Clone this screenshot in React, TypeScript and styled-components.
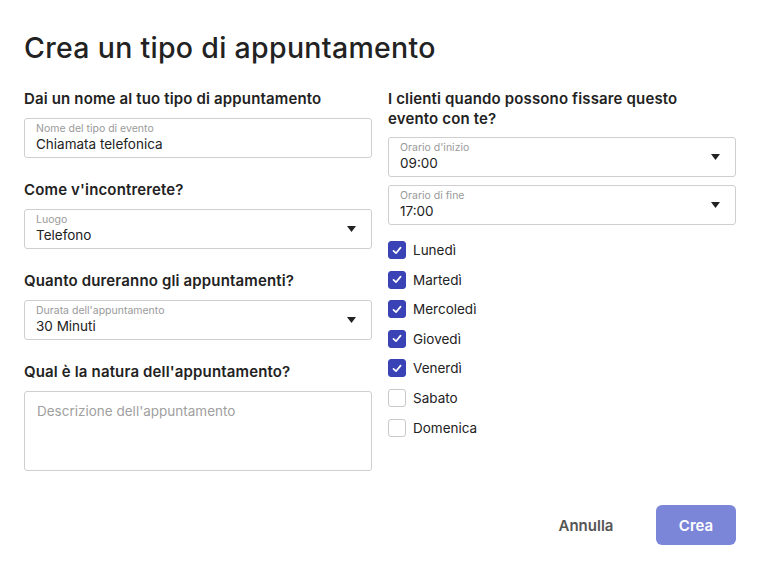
import React from "react";
import styled, { createGlobalStyle } from "styled-components";

const Global = createGlobalStyle`
  html, body { margin: 0; padding: 0; background: #fff; }
  body { font-family: "Inter", "Noto Sans", sans-serif; color: #222; }
  * { box-sizing: border-box; }
`;

const Page = styled.div`
  width: 762px;
  height: 570px;
  padding: 30px 26px 25px 24px;
  display: flex;
  flex-direction: column;
`;

const Title = styled.h1`
  margin: 0;
  font-size: 28.5px;
  line-height: 36px;
  font-weight: 500;
  color: #222;
  letter-spacing: 0.3px;
`;

const Columns = styled.div`
  margin-top: 23px;
  display: grid;
  grid-template-columns: 348px 348px;
  column-gap: 16px;
`;

const Column = styled.div`
  display: flex;
  flex-direction: column;
`;

const Heading = styled.div<{ $gap?: number; $mb?: number }>`
  font-size: 15px;
  line-height: 20px;
  font-weight: 600;
  color: #222;
  letter-spacing: 0.15px;
  margin-top: ${(p) => p.$gap ?? 0}px;
  margin-bottom: ${(p) => p.$mb ?? 9}px;
`;

const Field = styled.div<{ $mt?: number }>`
  position: relative;
  height: 40px;
  border: 1px solid #cfcfcf;
  border-radius: 3px;
  padding: 3px 11px 0;
  margin-top: ${(p) => p.$mt ?? 0}px;
  display: flex;
  flex-direction: column;
`;

const FieldLabel = styled.div`
  font-size: 10.5px;
  line-height: 13px;
  color: #9a9a9a;
`;

const FieldValue = styled.div`
  font-size: 13.5px;
  line-height: 18px;
  color: #222;
`;

const Caret = styled.svg`
  position: absolute;
  right: 15px;
  top: 16px;
`;

const TextArea = styled.div`
  height: 80px;
  border: 1px solid #cfcfcf;
  border-radius: 3px;
  padding: 10px 12px;
  font-size: 13.5px;
  line-height: 18px;
  color: #a0a0a0;
`;

const CheckList = styled.div`
  margin-top: 15px;
  display: flex;
  flex-direction: column;
  gap: 9.6px;
`;

const CheckRow = styled.div`
  display: flex;
  align-items: center;
  height: 20px;
  gap: 7px;
  font-size: 13.5px;
  color: #222;
`;

const Box = styled.div<{ $on: boolean }>`
  width: 18px;
  height: 18px;
  border-radius: 3px;
  background: ${(p) => (p.$on ? "#3a43b5" : "#fff")};
  border: 1px solid ${(p) => (p.$on ? "#3a43b5" : "#c9c9c9")};
  display: flex;
  align-items: center;
  justify-content: center;
`;

const Footer = styled.div`
  margin-top: auto;
  display: flex;
  justify-content: flex-end;
  align-items: center;
  gap: 30px;
`;

const Button = styled.button<{ $primary?: boolean }>`
  width: 80px;
  height: 40px;
  border: none;
  border-radius: 6px;
  font-family: inherit;
  font-size: 15px;
  font-weight: 600;
  cursor: pointer;
  background: ${(p) => (p.$primary ? "#7c86d9" : "transparent")};
  color: ${(p) => (p.$primary ? "#fff" : "#555")};
`;

const Arrow = () => (
  <Caret width="9" height="6" viewBox="0 0 9 6">
    <path d="M0 0 H9 L4.5 6 Z" fill="#222" />
  </Caret>
);

const Check = () => (
  <svg width="10" height="9" viewBox="0 0 10 9">
    <path d="M1.5 4.8 L4 7.2 L8.6 1.6" fill="none" stroke="#fff" strokeWidth="1.7" strokeLinecap="round" strokeLinejoin="round" />
  </svg>
);

const days: [string, boolean][] = [
  ["Lunedì", true],
  ["Martedì", true],
  ["Mercoledì", true],
  ["Giovedì", true],
  ["Venerdì", true],
  ["Sabato", false],
  ["Domenica", false],
];

export default function App() {
  return (
    <>
      <Global />
      <Page>
        <Title>Crea un tipo di appuntamento</Title>
        <Columns>
          <Column>
            <Heading>Dai un nome al tuo tipo di appuntamento</Heading>
            <Field>
              <FieldLabel>Nome del tipo di evento</FieldLabel>
              <FieldValue>Chiamata telefonica</FieldValue>
            </Field>
            <Heading $gap={22}>Come v'incontrerete?</Heading>
            <Field>
              <FieldLabel>Luogo</FieldLabel>
              <FieldValue>Telefono</FieldValue>
              <Arrow />
            </Field>
            <Heading $gap={22}>Quanto dureranno gli appuntamenti?</Heading>
            <Field>
              <FieldLabel>Durata dell'appuntamento</FieldLabel>
              <FieldValue>30 Minuti</FieldValue>
              <Arrow />
            </Field>
            <Heading $gap={22}>Qual è la natura dell'appuntamento?</Heading>
            <TextArea>Descrizione dell'appuntamento</TextArea>
          </Column>
          <Column>
            <Heading $mb={8}>
              I clienti quando possono fissare questo
              <br />
              evento con te?
            </Heading>
            <Field>
              <FieldLabel>Orario d'inizio</FieldLabel>
              <FieldValue>09:00</FieldValue>
              <Arrow />
            </Field>
            <Field $mt={8}>
              <FieldLabel>Orario di fine</FieldLabel>
              <FieldValue>17:00</FieldValue>
              <Arrow />
            </Field>
            <CheckList>
              {days.map(([d, on]) => (
                <CheckRow key={d}>
                  <Box $on={on}>{on && <Check />}</Box>
                  {d}
                </CheckRow>
              ))}
            </CheckList>
          </Column>
        </Columns>
        <Footer>
          <Button>Annulla</Button>
          <Button $primary>Crea</Button>
        </Footer>
      </Page>
    </>
  );
}
